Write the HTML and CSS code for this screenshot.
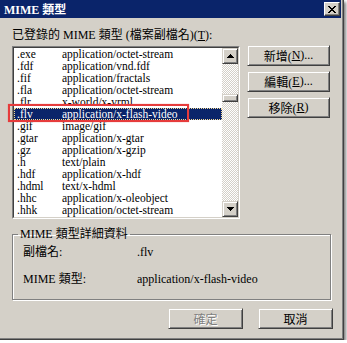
FILE: index.html
```html
<!DOCTYPE html>
<html>
<head>
    <title>MIME 類型</title>
    <link rel="stylesheet" href="styles.css">
</head>
<body>
<div class="window">
    <div class="title-bar">
        <span class="title-text">MIME 類型</span>
        <span class="close-btn raised">
            <svg width="8" height="7" viewBox="0 0 8 7"><path d="M0 0h2v1h1v1h2v-1h1v-1h2v1h-1v1h-1v1h-1v1h1v1h1v1h1v1h-2v-1h-1v-1h-2v1h-1v1h-2v-1h1v-1h1v-1h1v-1h-1v-1h-1v-1h-1z" fill="#000"/></svg>
        </span>
    </div>
    <div class="content">
        <div class="list-label">已登錄的 MIME 類型 (檔案副檔名)(<u>T</u>):</div>
        <div class="main-row">
            <div class="list-box">
                <div class="list-inner">
                    <div class="list-rows">
                        <div class="row"><span class="ext">.exe</span><span>application/octet-stream</span></div>
                        <div class="row"><span class="ext">.fdf</span><span>application/vnd.fdf</span></div>
                        <div class="row"><span class="ext">.fif</span><span>application/fractals</span></div>
                        <div class="row"><span class="ext">.fla</span><span>application/octet-stream</span></div>
                        <div class="row"><span class="ext">.flr</span><span>x-world/x-vrml</span></div>
                        <div class="row selected"><span class="ext">.flv</span><span>application/x-flash-video</span></div>
                        <div class="row"><span class="ext">.gif</span><span>image/gif</span></div>
                        <div class="row"><span class="ext">.gtar</span><span>application/x-gtar</span></div>
                        <div class="row"><span class="ext">.gz</span><span>application/x-gzip</span></div>
                        <div class="row"><span class="ext">.h</span><span>text/plain</span></div>
                        <div class="row"><span class="ext">.hdf</span><span>application/x-hdf</span></div>
                        <div class="row"><span class="ext">.hdml</span><span>text/x-hdml</span></div>
                        <div class="row"><span class="ext">.hhc</span><span>application/x-oleobject</span></div>
                        <div class="row"><span class="ext">.hhk</span><span>application/octet-stream</span></div>
                    </div>
                    <div class="scroll-bar">
                        <div class="scroll-btn raised">
                            <svg width="7" height="4" viewBox="0 0 7 4"><path d="M3 0h1v1h1v1h1v1h1v1H0v-1h1v-1h1v-1h1z" fill="#000"/></svg>
                        </div>
                        <div class="scroll-track">
                            <div class="scroll-thumb raised"></div>
                        </div>
                        <div class="scroll-btn raised">
                            <svg width="7" height="4" viewBox="0 0 7 4"><path d="M0 0h7v1h-1v1h-1v1h-1v1h-1v-1h-1v-1h-1v-1h-1z" fill="#000"/></svg>
                        </div>
                    </div>
                </div>
                <div class="mark"></div>
            </div>
            <div class="side-buttons">
                <div class="btn raised">新增(<u>N</u>)...</div>
                <div class="btn raised">編輯(<u>E</u>)...</div>
                <div class="btn raised">移除(<u>R</u>)</div>
            </div>
        </div>
        <fieldset class="details">
            <legend>MIME 類型詳細資料</legend>
            <div class="detail-grid">
                <span>副檔名:</span><span>.flv</span>
                <span>MIME 類型:</span><span>application/x-flash-video</span>
            </div>
        </fieldset>
        <div class="footer">
            <div class="btn wide raised disabled">確定</div>
            <div class="btn wide raised">取消</div>
        </div>
    </div>
</div>
</body>
</html>
```
FILE: styles.css
```css
body {
margin: 0;
background: #fff;
font-family: "Liberation Serif", "Noto Sans CJK TC", serif;
font-size: 12px;
color: #000;
}

.window {
width: 344px;
height: 340px;
box-sizing: border-box;
background: #D4D0C8;
border-right: 1px solid #404040;
border-bottom: 1px solid #404040;
box-shadow: inset -1px -1px 0 #808080, 2px 2px 3px rgba(0, 0, 0, 0.5);
}

.raised {
box-sizing: border-box;
background: #D4D0C8;
border: 1px solid;
border-color: #D4D0C8 #404040 #404040 #D4D0C8;
box-shadow: inset 1px 1px 0 #fff, inset -1px -1px 0 #808080;
}

.title-bar {
width: 341px;
height: 18px;
box-sizing: border-box;
padding-left: 4px;
background: #0A246A;
display: flex;
align-items: center;
justify-content: space-between;
}

.title-text {
color: #fff;
font-weight: bold;
font-size: 12px;
}

.close-btn {
width: 16px;
height: 14px;
margin-right: 1px;
display: flex;
align-items: center;
justify-content: center;
border-color: #fff #404040 #404040 #fff;
box-shadow: inset -1px -1px 0 #808080;
}

.content {
padding: 10px 0 0 12px;
}

.list-label {
height: 14px;
line-height: 14px;
}

.main-row {
display: flex;
margin-top: 4px;
}

.list-box {
position: relative;
width: 228px;
height: 173px;
box-sizing: border-box;
border: 1px solid;
border-color: #808080 #fff #fff #808080;
}

.list-inner {
height: 100%;
box-sizing: border-box;
border: 1px solid;
border-color: #404040 #D4D0C8 #D4D0C8 #404040;
background: #fff;
display: flex;
}

.list-rows {
flex: 1;
overflow: hidden;
}

.row {
display: flex;
height: 12px;
line-height: 12px;
padding-left: 3px;
font-size: 11.5px;
white-space: nowrap;
}

.ext {
width: 45px;
}

.row.selected {
background: #0A246A;
color: #fff;
outline: 1px dotted #F5DB95;
outline-offset: -1px;
}

.scroll-bar {
width: 16px;
display: flex;
flex-direction: column;
}

.scroll-btn {
height: 16px;
display: flex;
align-items: center;
justify-content: center;
}

.scroll-track {
flex: 1;
background: repeating-conic-gradient(#D4D0C8 0 25%, #fff 0 50%) 0 0 / 2px 2px;
}

.scroll-thumb {
height: 8px;
margin-top: 30px;
}

/* red box drawn over the selected row */
.mark {
position: absolute;
left: -5px;
top: 57px;
width: 181px;
height: 18px;
box-sizing: border-box;
border: 2px solid #E63B3B;
box-shadow: 0 0 1px rgba(230, 59, 59, 0.6);
}

.side-buttons {
display: flex;
flex-direction: column;
gap: 5px;
margin-left: 7px;
margin-top: -1px;
}

.btn {
width: 83px;
height: 21px;
display: flex;
align-items: center;
justify-content: center;
font-size: 12px;
}

.btn.wide {
width: 75px;
}

.btn.disabled {
color: #808080;
text-shadow: 1px 1px 0 #fff;
}

.details {
margin: 8px 0 0 0;
width: 319px;
height: 73px;
box-sizing: border-box;
padding: 0 0 0 10px;
border: 1px solid #808080;
box-shadow: inset 1px 1px 0 #fff, 1px 1px 0 #fff;
}

.details legend {
margin-left: -5px;
padding: 0 2px;
line-height: 14px;
}

.detail-grid {
display: grid;
grid-template-columns: 114px auto;
row-gap: 13px;
margin-top: 4px;
line-height: 14px;
}

.footer {
display: flex;
justify-content: flex-end;
gap: 15px;
margin-top: 8px;
padding-right: 10px;
}
```
